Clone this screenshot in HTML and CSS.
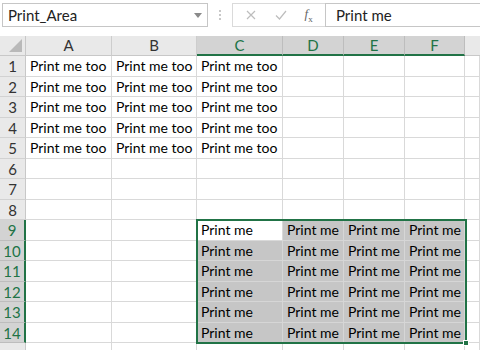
FILE: index.html
```html
<!DOCTYPE html>
<html>
<head>
<meta charset="utf-8">
<link rel="stylesheet" href="styles.css">
</head>
<body>
<div class="app">
  <div class="topbar">
    <div class="namebox">
      <span class="nametext">Print_Area</span>
      <svg class="caret" width="8" height="5" viewBox="0 0 8 5"><path d="M0 0h8L4 5z" fill="#8a8a8a"/></svg>
    </div>
    <div class="sep"><span></span><span></span><span></span></div>
    <div class="fbtns">
      <svg width="12" height="12" viewBox="0 0 12 12"><path d="M2 2l8 8M10 2l-8 8" stroke="#bdbdbd" stroke-width="1.2"/></svg>
      <svg width="14" height="12" viewBox="0 0 14 12"><path d="M2 6.5l3.5 3.5L12 2" stroke="#bdbdbd" stroke-width="1.2" fill="none"/></svg>
      <span class="fx"><i>f</i><sub>x</sub></span>
    </div>
    <div class="formula">Print me</div>
  </div>
  <div class="sheet">
    <div class="corner"><span class="tri"></span></div>
    <div class="ch">A</div><div class="ch">B</div><div class="ch sel">C</div><div class="ch sel">D</div><div class="ch sel">E</div><div class="ch sel">F</div><div class="ch last"></div>

    <div class="rh">1</div><div class="c">Print me too</div><div class="c">Print me too</div><div class="c">Print me too</div><div class="c"></div><div class="c"></div><div class="c"></div><div class="c"></div>
    <div class="rh">2</div><div class="c">Print me too</div><div class="c">Print me too</div><div class="c">Print me too</div><div class="c"></div><div class="c"></div><div class="c"></div><div class="c"></div>
    <div class="rh">3</div><div class="c">Print me too</div><div class="c">Print me too</div><div class="c">Print me too</div><div class="c"></div><div class="c"></div><div class="c"></div><div class="c"></div>
    <div class="rh">4</div><div class="c">Print me too</div><div class="c">Print me too</div><div class="c">Print me too</div><div class="c"></div><div class="c"></div><div class="c"></div><div class="c"></div>
    <div class="rh">5</div><div class="c">Print me too</div><div class="c">Print me too</div><div class="c">Print me too</div><div class="c"></div><div class="c"></div><div class="c"></div><div class="c"></div>
    <div class="rh">6</div><div class="c"></div><div class="c"></div><div class="c"></div><div class="c"></div><div class="c"></div><div class="c"></div><div class="c"></div>
    <div class="rh">7</div><div class="c"></div><div class="c"></div><div class="c"></div><div class="c"></div><div class="c"></div><div class="c"></div><div class="c"></div>
    <div class="rh">8</div><div class="c"></div><div class="c"></div><div class="c"></div><div class="c"></div><div class="c"></div><div class="c"></div><div class="c"></div>
    <div class="rh sel">9</div><div class="c"></div><div class="c"></div><div class="c act">Print me</div><div class="c s">Print me</div><div class="c s">Print me</div><div class="c s">Print me</div><div class="c"></div>
    <div class="rh sel">10</div><div class="c"></div><div class="c"></div><div class="c s">Print me</div><div class="c s">Print me</div><div class="c s">Print me</div><div class="c s">Print me</div><div class="c"></div>
    <div class="rh sel">11</div><div class="c"></div><div class="c"></div><div class="c s">Print me</div><div class="c s">Print me</div><div class="c s">Print me</div><div class="c s">Print me</div><div class="c"></div>
    <div class="rh sel">12</div><div class="c"></div><div class="c"></div><div class="c s">Print me</div><div class="c s">Print me</div><div class="c s">Print me</div><div class="c s">Print me</div><div class="c"></div>
    <div class="rh sel">13</div><div class="c"></div><div class="c"></div><div class="c s">Print me</div><div class="c s">Print me</div><div class="c s">Print me</div><div class="c s">Print me</div><div class="c"></div>
    <div class="rh sel">14</div><div class="c"></div><div class="c"></div><div class="c s">Print me</div><div class="c s">Print me</div><div class="c s">Print me</div><div class="c s">Print me</div><div class="c"></div>
    <div class="rh"></div><div class="c"></div><div class="c"></div><div class="c"></div><div class="c"></div><div class="c"></div><div class="c"></div><div class="c"></div>

    <div class="selection"><span class="handle"></span></div>
  </div>
</div>
</body>
</html>
```
FILE: styles.css
```css
* { box-sizing: border-box; }
html, body { margin: 0; padding: 0; background: #fff; }
body { width: 480px; height: 350px; overflow: hidden; font-family: Lato, "Liberation Sans", sans-serif; color: #000; }
.app { width: 480px; height: 350px; overflow: hidden; }

.topbar { height: 36px; display: flex; align-items: flex-start; padding-top: 3px; background: #fff; }
.namebox { margin-left: 2px; width: 206px; height: 24px; border: 1px solid #c6c6c6; background: #fff; display: flex; align-items: center; justify-content: space-between; padding: 0 5px 0 5px; }
.nametext { font-size: 15px; color: #222; }
.caret { margin-top: 1px; }
.sep { width: 24px; height: 24px; display: flex; flex-direction: column; align-items: center; justify-content: center; gap: 2px; }
.sep span { width: 2px; height: 2px; background: #c8c8c8; display: block; }
.fbtns { width: 93px; height: 24px; border: 1px solid #dadada; border-right: none; display: flex; align-items: center; justify-content: space-around; padding: 0 4px 0 4px; background: #fff; }
.fx { font-family: "Liberation Serif", serif; font-size: 13px; color: #666; }
.fx sub { font-size: 9px; }
.formula { flex: 1; height: 24px; border: 1px solid #c6c6c6; border-right: none; font-size: 15px; padding-left: 10px; line-height: 22px; color: #222; }

.sheet { position: relative; display: grid; grid-template-columns: 26px 86px 85px 86px 61px 61px 60px 1fr; grid-template-rows: 20px; grid-auto-rows: 20.5px; font-size: 14px; }
.corner { background: #e9e9e9; border-right: 1px solid #c8c8c8; border-bottom: 1px solid #c8c8c8; position: relative; }
.tri { position: absolute; right: 3px; bottom: 3px; width: 0; height: 0; border-left: 13px solid transparent; border-bottom: 13px solid #b9b9b9; }
.ch { background: #e9e9e9; border-right: 1px solid #cdcdcd; border-bottom: 1px solid #c8c8c8; text-align: center; color: #333; line-height: 19px; font-size: 15px; }
.ch.sel { background: #d3d3d3; color: #217346; border-bottom: 2px solid #217346; border-right-color: #bdbdbd; }
.ch.last { border-right: none; }
.rh { background: #e9e9e9; border-right: 1px solid #c8c8c8; border-bottom: 1px solid #d2d2d2; text-align: center; color: #333; line-height: 20px; font-size: 15px; }
.rh.sel { background: #d3d3d3; color: #217346; border-right: 2px solid #217346; border-bottom-color: #bdbdbd; }
.c { border-right: 1px solid #d9d9d9; border-bottom: 1px solid #d9d9d9; padding-left: 4px; white-space: nowrap; overflow: hidden; line-height: 20px; }
.c.s { background: #c6c6c6; border-color: #d6d6d6; }
.c.act { background: #fff; }

.selection { position: absolute; left: 196px; top: 183px; width: 271px; height: 125px; border: 2px solid #217346; pointer-events: none; }
.handle { position: absolute; right: -4px; bottom: -4px; width: 6px; height: 6px; background: #217346; border: 1px solid #fff; }
```
